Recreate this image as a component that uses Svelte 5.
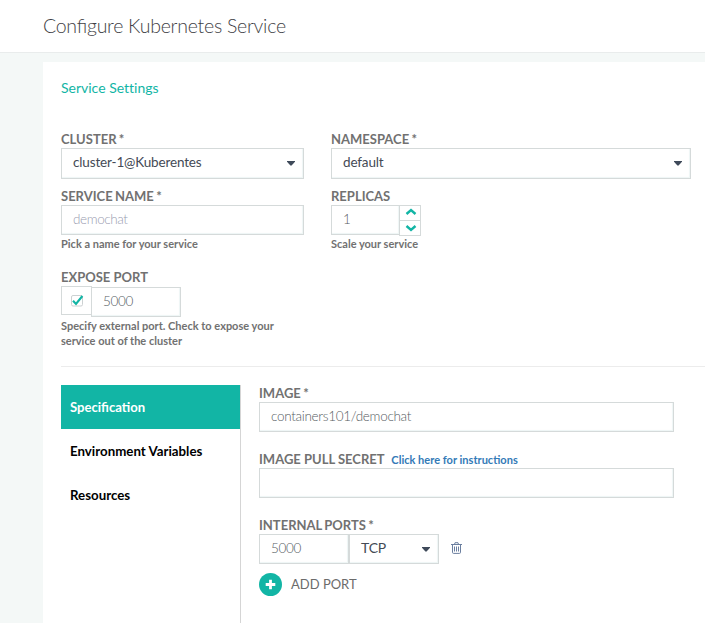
<script>
  let tabs = ['Specification', 'Environment Variables', 'Resources'];
  let active = $state('Specification');
</script>

{#snippet caret()}
  <svg class="caret" width="8" height="5" viewBox="0 0 8 5"><path d="M0 0h8v.8L4.8 4.3Q4 5 3.2 4.3L0 .8Z" fill="#3f4a5a" /></svg>
{/snippet}

<div class="page">
  <header><h1>Configure Kubernetes Service</h1></header>
  <main>
    <h2>Service Settings</h2>
    <div class="row first">
      <div class="field left">
        <div class="label">CLUSTER *</div>
        <div class="box select"><span>cluster-1@Kuberentes</span>{@render caret()}</div>
      </div>
      <div class="field wide">
        <div class="label">NAMESPACE *</div>
        <div class="box select"><span>default</span>{@render caret()}</div>
      </div>
    </div>
    <div class="row second">
      <div class="field left">
        <div class="label">SERVICE NAME *</div>
        <div class="box muted">demochat</div>
        <div class="hint">Pick a name for your service</div>
      </div>
      <div class="field">
        <div class="label">REPLICAS</div>
        <div class="stepper">
          <div class="box count">1</div>
          <div class="steps">
            <button aria-label="Increase"><svg width="12" height="8" viewBox="0 0 12 8"><path d="M1.5 6L6 2L10.5 6" /></svg></button>
            <button aria-label="Decrease"><svg width="12" height="8" viewBox="0 0 12 8"><path d="M1.5 2L6 6L10.5 2" /></svg></button>
          </div>
        </div>
        <div class="hint scale">Scale your service</div>
      </div>
    </div>
    <div class="expose">
      <div class="label port-label">EXPOSE PORT</div>
      <div class="port">
        <div class="check">
          <svg width="14" height="13" viewBox="0 0 14 13"><rect x="1.5" y="1.5" width="11" height="10.5" rx="1.5" fill="#fff" stroke="#ccd1d2" /><path d="M3 6.8L6 10L12.4 2" fill="none" stroke="#12b5a5" stroke-width="2.1" /></svg>
        </div>
        <div class="box small">5000</div>
      </div>
      <div class="hint">Specify external port. Check to expose your<br />service out of the cluster</div>
    </div>
    <div class="rule"></div>
    <div class="details">
      <nav>
        {#each tabs as tab}
          <button class:active={active === tab} onclick={() => (active = tab)}>{tab}</button>
        {/each}
      </nav>
      <section>
        <div class="group">
          <div class="label">IMAGE *</div>
          <div class="box">containers101/demochat</div>
        </div>
        <div class="group">
          <div class="label secret">IMAGE PULL SECRET <a href="#instructions">Click here for instructions</a></div>
          <div class="box"></div>
        </div>
        <div class="label">INTERNAL PORTS *</div>
        <div class="ports">
          <div class="box small">5000</div>
          <div class="box select proto"><span>TCP</span>{@render caret()}</div>
          <svg class="trash" width="11" height="12" viewBox="0 0 11 12" fill="none" stroke="#6b7f9f"><path d="M0 2.5H11M3.5 2.5L4 .7H7L7.5 2.5M1.5 2.5V10.3Q1.5 11.4 2.5 11.4H8.5Q9.5 11.4 9.5 10.3V2.5M3.5 4.5V9.5M5.5 4.5V9.5M7.5 4.5V9.5" /></svg>
        </div>
        <div class="add">
          <svg width="23" height="23" viewBox="0 0 23 23"><circle cx="11.5" cy="11.5" r="11.5" fill="#12b5a5" /><path d="M11.5 6.7V16.3M6.7 11.5H16.3" stroke="#fff" stroke-width="2.8" /></svg>
          <span>ADD PORT</span>
        </div>
      </section>
    </div>
  </main>
</div>

<style>
  .page {
    width: 705px;
    height: 623px;
    overflow: hidden;
    background: #f4f8f7;
    font: 14px/20px Lato, sans-serif;
    color: #6b6b6b;
  }
  .page, .page * { box-sizing: border-box; }
  header { height: 53px; padding: 12px 43px; background: #fff; border-bottom: 1px solid #e9ecec; }
  h1 { margin: 0; font-size: 19.5px; line-height: 28px; font-weight: 300; letter-spacing: -.26px; font-feature-settings: "liga" 1; color: #3f3f46; white-space: nowrap; }
  main { margin: 9px 0 0 43px; height: 561px; padding: 16px 0 0 18px; background: #fff; }
  h2 { margin: 0; font-size: 14px; line-height: 20px; font-weight: 400; font-variant-ligatures: none; color: #12b5a5; }
  .row { display: flex; gap: 27px; }
  .first { margin-top: 32px; height: 57px; }
  .second { height: 81px; }
  .left { width: 243px; }
  .wide { width: 360px; }
  .label { height: 18px; font-size: 13px; line-height: 18px; font-weight: 700; word-spacing: -.8px; color: #717171; white-space: nowrap; }
  .port-label { word-spacing: 0; }
  .box {
    display: flex;
    height: 30px;
    padding: 0 11px;
    border: 1px solid #d5dada;
    background: #fff;
    box-shadow: inset -1px -1px 1px #eef6f5;
    font-size: 13.5px;
    line-height: 26px;
    font-weight: 300;
    letter-spacing: -.3px;
    color: #565c63;
  }
  .select { height: 31px; justify-content: space-between; align-items: flex-start; font-weight: 400; letter-spacing: -.15px; color: #444a55; padding-right: 8px; }
  .caret { margin-top: 12px; }
  .muted { color: #9a9db0; letter-spacing: -.4px; }
  .hint { font-size: 11px; line-height: 15px; font-weight: 700; color: #717171; margin-top: 1px; white-space: nowrap; }
  .stepper { display: flex; height: 31px; }
  .count { width: 69px; }
  .steps { display: flex; flex-direction: column; width: 22px; margin-left: -1px; }
  .steps button { display: flex; justify-content: center; align-items: center; height: 16px; padding: 0 0 0 1px; border: 1px solid #d5dada; background: #fff; }
  .steps button:first-child { padding-bottom: 2px; }
  .steps button + button { margin-top: -1px; }
  .steps path { fill: none; stroke: #12b5a5; stroke-width: 2.4; }
  .scale { margin-top: 0; }
  .expose { height: 98px; }
  .port { display: flex; height: 31px; }
  .check { display: flex; align-items: center; justify-content: center; width: 31px; height: 29px; padding-left: 1px; border: 1px solid #d5dada; }
  .small { width: 90px; }
  .port .small { margin: 1px 0 0 -1px; }
  .rule { height: 1px; background: #ececec; }
  .details { display: flex; margin-top: 18px; }
  nav { width: 180px; height: 238px; border-right: 1px solid #d5d5d5; }
  nav button { display: block; width: 179px; height: 44px; padding: 0 9px; border: 0; background: #fff; text-align: left; font: 700 13.3px/20px Lato, sans-serif; color: #000; }
  nav .active { background: #12b5a5; color: #fff; font-size: 13.1px; }
  section { width: 415px; margin-left: 18px; }
  .group { height: 66px; }
  section .label { height: 17px; line-height: 17px; }
  section .secret { word-spacing: 0; }
  .label a { margin-left: 4px; font-size: 11.05px; color: #337ab7; text-decoration: none; }
  .ports { display: flex; height: 30px; }
  .proto { width: 90px; height: 30px; font-size: 14px; }
  .trash { margin: 8px 0 0 12px; }
  .add { display: flex; align-items: center; gap: 9px; margin-top: 9px; font-size: 13px; }
  .add span { position: relative; top: -1px; }
</style>
